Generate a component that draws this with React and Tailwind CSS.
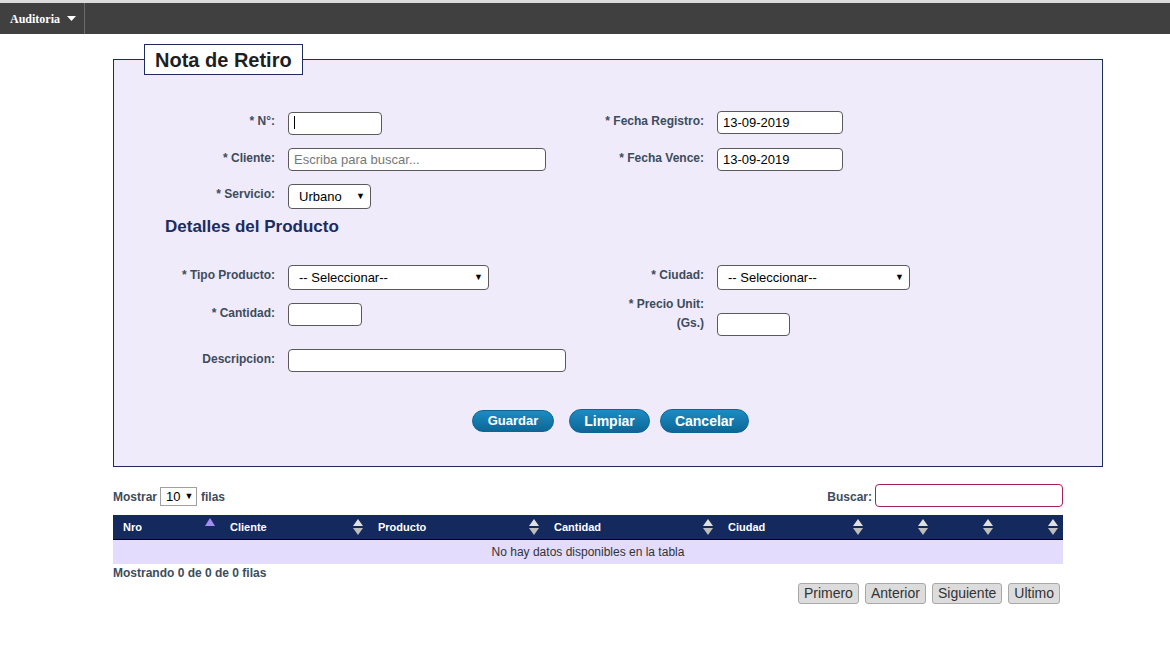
import React from 'react';

const label = 'text-[12px] leading-[19px] font-bold text-[#3d4c5c] text-right pt-px';
const input = 'h-[23px] bg-white border border-[#5a5a5a] rounded-[4px] px-[5px] text-[13px] text-black outline-none';

function Select({ value, className }) {
  return (
    <div className={`relative h-[25px] bg-white border border-[#5a5a5a] rounded-[4px] ${className}`}>
      <div className="pl-[10px] leading-[23px] text-[13px] text-black">{value}</div>
      <span className="absolute right-[5px] top-0 leading-[23px] text-[9px] text-black">▼</span>
    </div>
  );
}

function SortBoth() {
  return (
    <svg width="10" height="16" viewBox="0 0 10 16">
      <path d="M5 0 L10 7 L0 7 Z" fill="#e0e0e0" />
      <path d="M5 16 L10 9 L0 9 Z" fill="#bdbdbd" />
    </svg>
  );
}

function SortAsc() {
  return (
    <svg width="10" height="8" viewBox="0 0 10 8">
      <path d="M5 0 L10 8 L0 8 Z" fill="#a58cf0" />
    </svg>
  );
}

const cols = [
  { name: 'Nro', w: 'w-[107px]', asc: true },
  { name: 'Cliente', w: 'w-[148px]' },
  { name: 'Producto', w: 'w-[176px]' },
  { name: 'Cantidad', w: 'w-[174px]' },
  { name: 'Ciudad', w: 'w-[150px]' },
  { name: '', w: 'w-[65px]' },
  { name: '', w: 'w-[65px]' },
  { name: '', w: 'w-[65px]' },
];

export default function App() {
  return (
    <div className="min-h-screen bg-white font-['Liberation_Sans',Arial,sans-serif]">
      {/* Top bar */}
      <div className="border-t-[3px] border-[#dcdcdc] bg-[#404040] h-[34px] flex">
        <div className="flex items-center pl-[10px] pr-[8px] border-r border-[#6a6a6a]">
          <span className="font-['Liberation_Serif',serif] font-bold text-[12px] text-white">Auditoria</span>
          <svg className="ml-[7px]" width="9" height="5" viewBox="0 0 9 5">
            <path d="M0 0 L9 0 L4.5 5 Z" fill="#ffffff" />
          </svg>
        </div>
      </div>

      <div className="ml-[113px] w-[990px]">
        {/* Fieldset */}
        <div className="relative mt-[25px] border border-[#1e2b5e] bg-[#efebfb] pt-[51px] pb-[33px]">
          <div className="absolute left-[30px] top-[-16px] h-[31px] bg-white border border-[#1e2b5e] px-[10px] flex items-center">
            <span className="text-[20px] font-bold text-[#1f1f1f]">Nota de Retiro</span>
          </div>

          {/* Row 1 */}
          <div className="flex">
            <div className="w-[476px] flex items-start">
              <div className={`${label} w-[161px]`}>* N°:</div>
              <div className="relative ml-[13px]">
                <input className={`${input} w-[94px]`} />
                <span className="absolute left-[6px] top-[5px] w-px h-[13px] bg-black" />
              </div>
            </div>
            <div className="flex items-start">
              <div className={`${label} w-[114px]`}>* Fecha Registro:</div>
              <input className={`${input} w-[126px] ml-[13px]`} defaultValue="13-09-2019" />
            </div>
          </div>

          {/* Row 2 */}
          <div className="flex mt-[13px]">
            <div className="w-[476px] flex items-start">
              <div className={`${label} w-[161px]`}>* Cliente:</div>
              <input className={`${input} w-[258px] ml-[13px] placeholder-[#777]`} placeholder="Escriba para buscar..." />
            </div>
            <div className="flex items-start">
              <div className={`${label} w-[114px]`}>* Fecha Vence:</div>
              <input className={`${input} w-[126px] ml-[13px]`} defaultValue="13-09-2019" />
            </div>
          </div>

          {/* Row 3 */}
          <div className="flex mt-[13px] items-start">
            <div className={`${label} w-[161px]`}>* Servicio:</div>
            <Select value="Urbano" className="w-[83px] ml-[13px]" />
          </div>

          <h2 className="mt-[8px] pl-[51px] text-[17px] leading-[20px] font-bold text-[#1b2c5e]">Detalles del Producto</h2>

          {/* Tipo / Ciudad */}
          <div className="flex mt-[28px]">
            <div className="w-[476px] flex items-start">
              <div className={`${label} w-[161px]`}>* Tipo Producto:</div>
              <Select value="-- Seleccionar--" className="w-[201px] ml-[13px]" />
            </div>
            <div className="flex items-start">
              <div className={`${label} w-[114px]`}>* Ciudad:</div>
              <Select value="-- Seleccionar--" className="w-[193px] ml-[13px]" />
            </div>
          </div>

          {/* Cantidad / Precio */}
          <div className="flex mt-[3px]">
            <div className="w-[476px] flex items-start pt-[10px]">
              <div className={`${label} w-[161px]`}>* Cantidad:</div>
              <input className={`${input} w-[74px] ml-[13px]`} />
            </div>
            <div className="flex items-start">
              <div className="w-[114px] text-[12px] leading-[19px] font-bold text-[#3d4c5c] text-right pt-[2px]">
                * Precio Unit:
                <br />
                (Gs.)
              </div>
              <input className={`${input} w-[73px] ml-[13px] mt-[20px]`} />
            </div>
          </div>

          {/* Descripcion */}
          <div className="flex mt-[13px] items-start">
            <div className={`${label} w-[161px]`}>Descripcion:</div>
            <input className={`${input} w-[278px] ml-[13px]`} />
          </div>

          {/* Buttons */}
          <div className="flex justify-center items-center mt-[37px] h-[24px] pl-[5px]">
            <button className="h-[22px] w-[82px] rounded-full border border-[#0f6592] bg-gradient-to-b from-[#1c8cc4] to-[#0d6797] text-white text-[13px] font-bold">
              Guardar
            </button>
            <button className="ml-[15px] h-[24px] w-[81px] rounded-full border border-[#0f6592] bg-gradient-to-b from-[#1c8cc4] to-[#0d6797] text-white text-[14px] font-bold">
              Limpiar
            </button>
            <button className="ml-[10px] h-[24px] w-[89px] rounded-full border border-[#0f6592] bg-gradient-to-b from-[#1c8cc4] to-[#0d6797] text-white text-[14px] font-bold">
              Cancelar
            </button>
          </div>
        </div>

        {/* Table controls */}
        <div className="w-[950px] mt-[17px] flex items-center justify-between h-[23px]">
          <div className="flex items-center text-[12px] font-bold text-[#3d4c5c] pt-[2px]">
            <span>Mostrar</span>
            <div className="ml-[3px] h-[19px] w-[37px] border border-[#a0a0a0] bg-white flex items-center pl-[5px] text-[13px] font-normal text-black">
              10<span className="ml-[4px] text-[9px]">▼</span>
            </div>
            <span className="ml-[4px]">filas</span>
          </div>
          <div className="flex items-center text-[12px] font-bold text-[#3d4c5c]">
            <span className="mr-[3px] mt-[3px]">Buscar:</span>
            <input className="h-[23px] w-[188px] border border-[#a2205c] rounded-[4px] bg-white outline-none" />
          </div>
        </div>

        {/* Table */}
        <div className="w-[950px] mt-[8px]">
          <div className="flex h-[25px] bg-[#142a5f] border-b border-black">
            {cols.map((c, i) => (
              <div key={i} className={`${c.w} relative flex items-center pl-[10px] text-[11px] font-bold text-white`}>
                {c.name}
                <span className={`absolute right-[5px] ${c.asc ? 'top-[3px]' : 'top-[4px]'}`}>
                  {c.asc ? <SortAsc /> : <SortBoth />}
                </span>
              </div>
            ))}
          </div>
          <div className="h-[24px] bg-[#e4dcfd] flex items-center justify-center text-[12px] text-[#333]">
            No hay datos disponibles en la tabla
          </div>
          <div className="mt-[2px] text-[12px] leading-[14px] font-bold text-[#3d4c5c]">Mostrando 0 de 0 de 0 filas</div>
          <div className="flex justify-end gap-[6px] mt-[3px] pr-[3px]">
            {['Primero', 'Anterior', 'Siguiente', 'Ultimo'].map((b) => (
              <button key={b} className="h-[21px] px-[5px] bg-[#dcdcdc] border border-[#a8a8a8] rounded-[3px] text-[14px] text-[#333] leading-[19px]">
                {b}
              </button>
            ))}
          </div>
        </div>
      </div>
    </div>
  );
}
